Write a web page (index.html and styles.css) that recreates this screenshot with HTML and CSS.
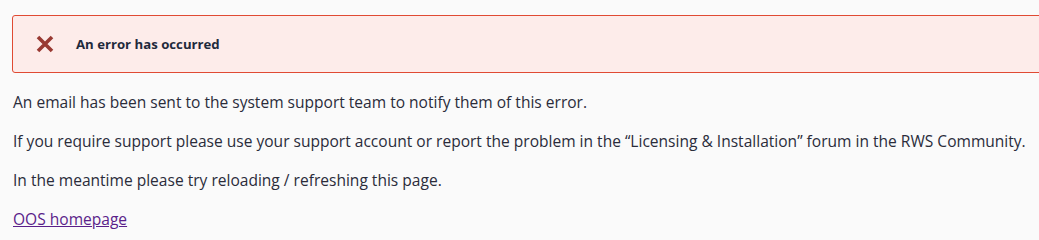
FILE: index.html
```html
<!DOCTYPE html>
<html lang="en">
<head>
<meta charset="utf-8">
<title>Error</title>
<link rel="stylesheet" href="styles.css">
</head>
<body>
<div class="page">
  <div class="alert">
    <svg class="alert-icon" width="18" height="18" viewBox="0 0 18 18" aria-hidden="true">
      <path d="M2 2 L16 16 M16 2 L2 16" stroke="#993a33" stroke-width="3.6" stroke-linecap="butt"/>
    </svg>
    <span class="alert-title">An error has occurred</span>
  </div>
  <p class="msg">An email has been sent to the system support team to notify them of this error.</p>
  <p class="msg">If you require support please use your support account or report the problem in the “Licensing &amp; Installation” forum in the RWS Community.</p>
  <p class="msg">In the meantime please try reloading / refreshing this page.</p>
  <p class="msg"><a class="home" href="#">OOS homepage</a></p>
</div>
</body>
</html>
```
FILE: styles.css
```css
html, body {
  margin: 0;
  padding: 0;
  background: #fafafa;
  overflow: hidden;
}
.page {
  padding: 15px 0 0 12px;
  font-family: "Open Sans", "Noto Sans", sans-serif;
  color: #2a2c3a;
}
.alert {
  display: flex;
  align-items: center;
  gap: 22px;
  height: 56px;
  margin-right: -20px;
  padding-left: 23px;
  background: #fdecea;
  border: 1px solid #e04a33;
  border-radius: 3px;
}
.alert-icon {
  flex: none;
}
.alert-title {
  font-weight: 700;
  font-size: 13.2px;
  color: #1f2a3c;
}
.msg {
  margin: 0;
  padding-left: 1px;
  font-size: 15.55px;
  line-height: 39px;
}
.msg:first-of-type {
  margin-top: 10px;
}
.home {
  color: #5a1f8a;
}
```
